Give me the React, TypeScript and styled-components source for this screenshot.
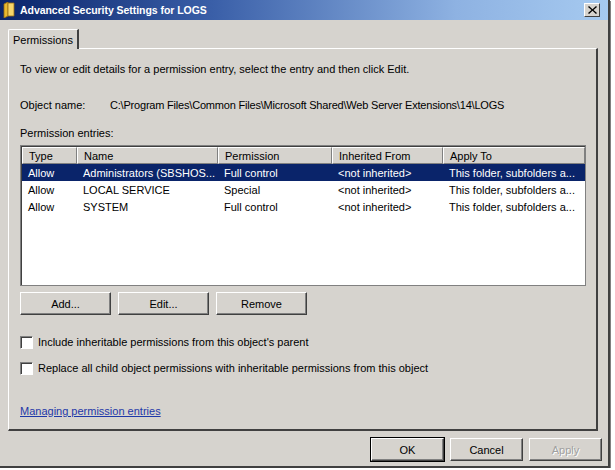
import React from 'react'
import styled, { createGlobalStyle } from 'styled-components'

const GlobalStyle = createGlobalStyle`
  html, body {
    margin: 0;
    padding: 0;
    background: #ffffff;
  }
  body {
    font-family: 'Liberation Sans', Arial, sans-serif;
    font-size: 11px;
    color: #000;
  }
`

const columns = [
  { title: 'Type', width: 55 },
  { title: 'Name', width: 141 },
  { title: 'Permission', width: 114 },
  { title: 'Inherited From', width: 111 },
  { title: 'Apply To', width: 142 },
]

const entries = [
  ['Allow', 'Administrators (SBSHOS...', 'Full control', '<not inherited>', 'This folder, subfolders a...'],
  ['Allow', 'LOCAL SERVICE', 'Special', '<not inherited>', 'This folder, subfolders a...'],
  ['Allow', 'SYSTEM', 'Full control', '<not inherited>', 'This folder, subfolders a...'],
]

export default function App() {
  return (
    <>
      <GlobalStyle />
      <Window>
        <TitleBar>
          <FolderIcon width="12" height="16" viewBox="0 0 12 16">
            <path d="M1 2 L5 0 L5 14 L1 16 Z" fill="#e8b830" stroke="#9a6d10" strokeWidth="0.8" />
            <path d="M5 1 L11 1 L11 14 L5 14 Z" fill="#f6d56a" stroke="#9a6d10" strokeWidth="0.8" />
          </FolderIcon>
          <Title>Advanced Security Settings for LOGS</Title>
          <CloseButton>
            <svg width="9" height="8" viewBox="0 0 9 8">
              <path d="M1 0 L4.5 3.2 L8 0 L9 1 L5.5 4 L9 7 L8 8 L4.5 4.8 L1 8 L0 7 L3.5 4 L0 1 Z" fill="#000" />
            </svg>
          </CloseButton>
        </TitleBar>

        <Body>
          <TabStrip>
            <Tab>Permissions</Tab>
          </TabStrip>
          <Panel>
            <Intro>To view or edit details for a permission entry, select the entry and then click Edit.</Intro>
            <ObjectRow>
              <ObjectLabel>Object name:</ObjectLabel>
              <ObjectPath>C:\Program Files\Common Files\Microsoft Shared\Web Server Extensions\14\LOGS</ObjectPath>
            </ObjectRow>
            <SectionLabel>Permission entries:</SectionLabel>
            <ListBox>
              <ListRow>
                {columns.map(c => (
                  <HeaderCell key={c.title} style={{ width: c.width }}>{c.title}</HeaderCell>
                ))}
              </ListRow>
              {entries.map((row, i) => (
                <ListRow key={i} $selected={i === 0}>
                  {row.map((cell, j) => (
                    <Cell key={j} style={{ width: columns[j].width }}>{cell}</Cell>
                  ))}
                </ListRow>
              ))}
            </ListBox>

            <ButtonRow>
              <Button $width={91}>Add...</Button>
              <Button $width={91}>Edit...</Button>
              <Button $width={91}>Remove</Button>
            </ButtonRow>

            <CheckRow $top={20}>
              <CheckBox />
              <span>Include inheritable permissions from this object's parent</span>
            </CheckRow>
            <CheckRow $top={12}>
              <CheckBox />
              <span>Replace all child object permissions with inheritable permissions from this object</span>
            </CheckRow>

            <HelpLink href="#">Managing permission entries</HelpLink>
          </Panel>

          <Footer>
            <Button $width={73} $default>OK</Button>
            <Button $width={73}>Cancel</Button>
            <Button $width={73} $disabled>Apply</Button>
          </Footer>
        </Body>
      </Window>
    </>
  )
}

const Window = styled.div`
  width: 608px;
  height: 466px;
  background: #d6d3ce;
  display: flex;
  flex-direction: column;
  border-right: 2px solid #404040;
  border-bottom: 2px solid #404040;
  box-shadow: 1px 1px 0 #808080;
  overflow: hidden;
`

const TitleBar = styled.div`
  height: 20px;
  flex-shrink: 0;
  display: flex;
  align-items: center;
  padding: 0 8px 0 3px;
  background: linear-gradient(to right, #0a246a 0%, #3a5fa8 35%, #8eb2e2 75%, #a6caf0 100%);
`

const FolderIcon = styled.svg`
  flex-shrink: 0;
  margin-right: 5px;
`

const Title = styled.div`
  flex: 1;
  color: #fff;
  font-weight: bold;
  font-size: 10.5px;
  letter-spacing: -0.05px;
`

const CloseButton = styled.div`
  width: 16px;
  height: 14px;
  display: flex;
  align-items: center;
  justify-content: center;
  background: #d6d3ce;
  border-top: 1px solid #fff;
  border-left: 1px solid #fff;
  border-right: 1px solid #404040;
  border-bottom: 1px solid #404040;
  box-sizing: border-box;
`

const Body = styled.div`
  flex: 1;
  display: flex;
  flex-direction: column;
  padding: 8px 10px 0 8px;
`

const TabStrip = styled.div`
  display: flex;
  height: 20px;
  align-items: flex-end;
`

const Tab = styled.div`
  height: 19px;
  padding: 0 4px 0 4px;
  display: flex;
  align-items: center;
  background: #d6d3ce;
  border-top: 1px solid #fff;
  border-left: 1px solid #fff;
  border-right: 2px solid #404040;
  border-top-left-radius: 2px;
  margin-bottom: -1px;
  position: relative;
  z-index: 1;
`

const Panel = styled.div`
  height: 383px;
  box-sizing: border-box;
  display: flex;
  flex-direction: column;
  padding: 14px 10px 0 11px;
  border-top: 1px solid #fff;
  border-left: 1px solid #fff;
  border-right: 2px solid #404040;
  border-bottom: 2px solid #404040;

  & > * {
    flex-shrink: 0;
  }
`

const Intro = styled.div`
  height: 14px;
`

const ObjectRow = styled.div`
  display: flex;
  margin-top: 22px;
  height: 14px;
`

const ObjectLabel = styled.span`
  width: 90px;
`

const ObjectPath = styled.span`
  letter-spacing: -0.2px;
`

const SectionLabel = styled.div`
  margin-top: 14px;
  height: 14px;
`

const ListBox = styled.div`
  margin-top: 4px;
  height: 141px;
  background: #fff;
  border: 1px solid #808080;
  box-shadow: inset 1px 1px 0 #404040;
  padding: 1px 0 0 1px;
  box-sizing: border-box;
`

const ListRow = styled.div<{ $selected?: boolean }>`
  display: flex;
  height: 17px;
  align-items: center;
  background: ${p => (p.$selected ? '#0a246a' : 'transparent')};
  color: ${p => (p.$selected ? '#fff' : '#000')};
  width: 563px;
`

const HeaderCell = styled.div`
  height: 17px;
  box-sizing: border-box;
  display: flex;
  align-items: center;
  padding-left: 6px;
  background: #d6d3ce;
  border-top: 1px solid #fff;
  border-left: 1px solid #fff;
  border-right: 1px solid #808080;
  border-bottom: 1px solid #808080;
  white-space: nowrap;
  overflow: hidden;
`

const Cell = styled.div`
  padding-left: 6px;
  box-sizing: border-box;
  white-space: nowrap;
  overflow: hidden;
`

const ButtonRow = styled.div`
  display: flex;
  gap: 7px;
  margin-top: 6px;
`

const Button = styled.div<{ $width: number; $default?: boolean; $disabled?: boolean }>`
  width: ${p => p.$width}px;
  height: 23px;
  box-sizing: border-box;
  display: flex;
  align-items: center;
  justify-content: center;
  background: #d6d3ce;
  color: ${p => (p.$disabled ? '#a0a0a0' : '#000')};
  text-shadow: ${p => (p.$disabled ? '1px 1px 0 #fff' : 'none')};
  border-top: 1px solid #fff;
  border-left: 1px solid #fff;
  border-right: 1px solid #404040;
  border-bottom: 1px solid #404040;
  box-shadow: ${p => (p.$default ? '0 0 0 1px #000, inset -1px -1px 0 #808080' : 'inset -1px -1px 0 #808080')};
`

const CheckRow = styled.label<{ $top: number }>`
  display: flex;
  align-items: center;
  gap: 5px;
  margin-top: ${p => p.$top}px;
  height: 14px;
`

const CheckBox = styled.span`
  width: 13px;
  height: 13px;
  box-sizing: border-box;
  background: #fff;
  border-top: 1px solid #808080;
  border-left: 1px solid #808080;
  border-right: 1px solid #fff;
  border-bottom: 1px solid #fff;
  box-shadow: inset 1px 1px 0 #404040;
  flex-shrink: 0;
`

const HelpLink = styled.a`
  margin-top: 30px;
  color: #1e38a8;
  text-decoration: underline;
  align-self: flex-start;
`

const Footer = styled.div`
  display: flex;
  justify-content: flex-end;
  gap: 6px;
  padding: 7px 0 0 0;
  margin-right: -4px;
`
